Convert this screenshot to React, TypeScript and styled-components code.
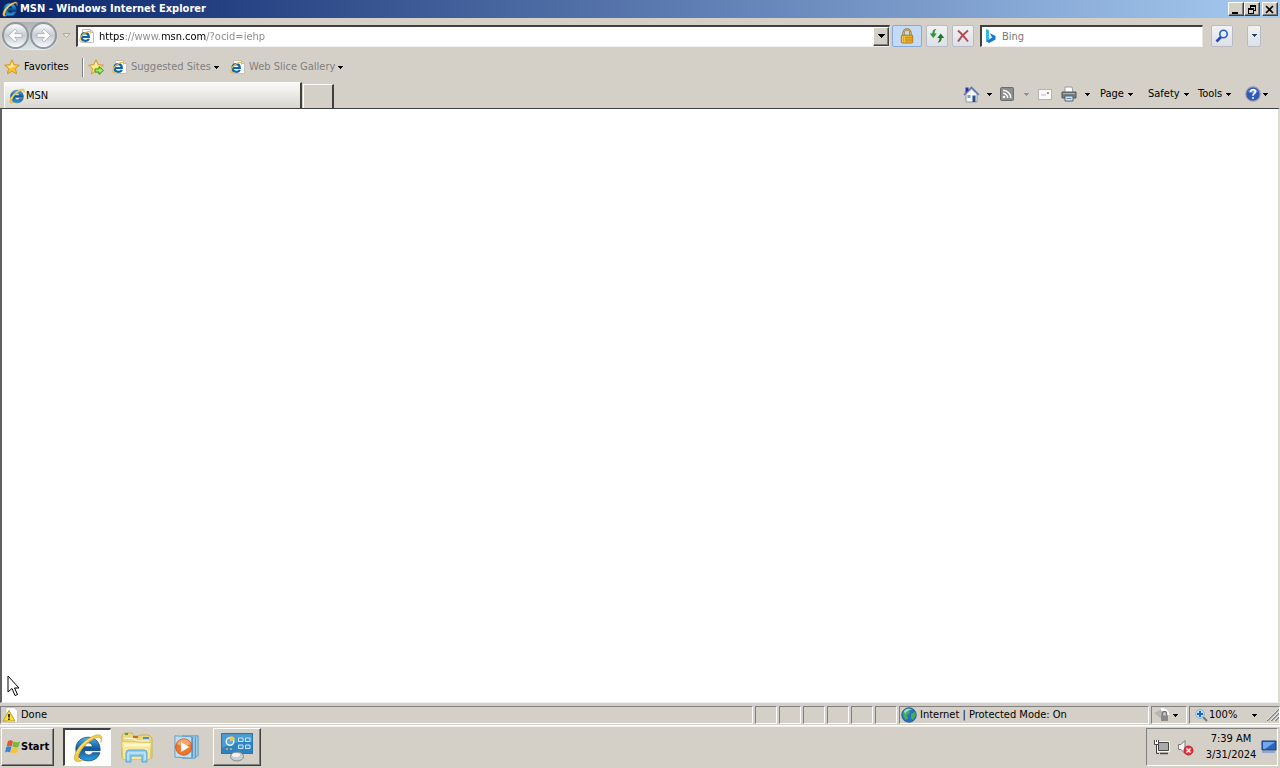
import React from "react";
import styled, { createGlobalStyle, css } from "styled-components";

const FACE = "#d4d0c8";

const GlobalStyle = createGlobalStyle`
  * { box-sizing: border-box; }
  html, body { margin: 0; padding: 0; }
  body, button, input {
    font-family: Tahoma, "DejaVu Sans Condensed", "Noto Sans", sans-serif;
    font-size: 11px;
    line-height: 14px;
    color: #000;
  }
  button { margin: 0; padding: 0; border: 0; background: none; }
  svg { display: block; flex: none; }
`;

const Desktop = styled.div`
  min-height: 100vh;
  display: flex;
  flex-direction: column;
  background: ${FACE};
  white-space: nowrap;
  overflow: hidden;
`;

const raised = css`
  border: 1px solid;
  border-color: #fff #404040 #404040 #fff;
  box-shadow: inset -1px -1px 0 #808080;
`;

const TitleBar = styled.header`
  height: 18px;
  padding: 0 2px;
  display: flex;
  align-items: center;
  gap: 2px;
  background: linear-gradient(90deg, #0a246a, #a6caf0);
`;

const Title = styled.h1`
  margin: 0;
  flex: 1;
  font-size: 11px;
  line-height: 14px;
  font-weight: bold;
  color: #fff;
`;

const CaptionButton = styled.button<{ $apart?: boolean }>`
  ${raised}
  width: 16px;
  height: 14px;
  margin-left: ${(p) => (p.$apart ? 0 : -2)}px;
  display: grid;
  place-items: center;
  background: ${FACE};
`;

const NavBar = styled.div`
  height: 35px;
  padding: 0 19px 0 2px;
  display: flex;
  align-items: center;
`;

const Travel = styled.div`
  display: flex;
  gap: 1px;
  border-radius: 14px;
  background: linear-gradient(#b0b2b5, #d9e6e8);
  box-shadow: 0 1px 1px #e2f1f2;
`;

const TravelButton = styled.button`
  width: 27px;
  height: 27px;
  display: grid;
  place-items: center;
  border: 2px solid #92979d;
  border-radius: 50%;
  background: linear-gradient(#f1f3f5 10%, #c6ccd3 50%, #f4fbfd);
`;

const HistoryButton = styled.button`
  width: 19px;
  height: 22px;
  display: grid;
  place-items: center;
`;

const Field = styled.div<{ $grow?: boolean }>`
  height: 22px;
  flex: ${(p) => (p.$grow ? "1" : "0 1 223px")};
  min-width: 0;
  margin-left: ${(p) => (p.$grow ? 0 : 6)}px;
  display: flex;
  align-items: center;
  gap: 4px;
  padding-left: ${(p) => (p.$grow ? 1 : 2)}px;
  background: #fff;
  border: 1px solid;
  border-width: 2px 1px 1px 2px;
  border-color: #404040 #e8e5df #f4f2ee #404040;
`;

const Input = styled.input`
  flex: 1;
  min-width: 0;
  height: 16px;
  padding: 0;
  border: 0;
  outline: 0;
  background: transparent;
  &::placeholder { color: #777; opacity: 1; }
`;

/* The scheme and the domain are dark, the rest of the address is grey. */
const AddressInput = styled(Input)`
  color: transparent;
  background: linear-gradient(90deg, #000 26px, #888 26px 63px, #000 63px 107px, #888 107px);
  background-clip: text;
  -webkit-background-clip: text;
`;

const DropButton = styled.button`
  ${raised}
  width: 16px;
  height: 19px;
  display: grid;
  place-items: center;
  background: ${FACE};
`;

const ToolButton = styled.button<{ $w?: number; $gap?: number; $lit?: boolean }>`
  width: ${(p) => p.$w ?? 22}px;
  height: 22px;
  margin-left: ${(p) => p.$gap ?? 4}px;
  display: grid;
  place-items: center;
  border: 1px solid ${(p) => (p.$lit ? "#86a9dc" : "#b9bcc4")};
  border-radius: 2px;
  background: ${(p) => (p.$lit ? "#c5daf7" : "linear-gradient(#f1f2f3, #dde0e5)")};
`;

const FavoritesBar = styled.nav`
  height: 28px;
  padding-left: 4px;
  display: flex;
  align-items: center;
`;

const LinkButton = styled.button<{ $dim?: boolean; $w?: number; $gap?: number }>`
  display: flex;
  align-items: center;
  gap: ${(p) => (p.$dim ? 3 : 4)}px;
  min-width: ${(p) => p.$w ?? 0}px;
  margin-left: ${(p) => p.$gap ?? 0}px;
  color: ${(p) => (p.$dim ? "#808080" : "#000")};
`;

const Divider = styled.span`
  width: 2px;
  height: 19px;
  border-left: 1px solid #808080;
  border-right: 1px solid #fff;
`;

const TabRow = styled.div`
  height: 27px;
  padding: 0 12px 0 4px;
  display: flex;
  align-items: flex-end;
`;

const Tab = styled.button`
  width: 298px;
  height: 26px;
  padding-left: 4px;
  display: flex;
  align-items: center;
  gap: 1px;
  background: linear-gradient(#fafaf9, #d8d5ce);
  border: 1px solid;
  border-width: 1px 2px 0 1px;
  border-color: #fff #404040 #fff #fff;
`;

const NewTab = styled.button`
  width: 31px;
  height: 24px;
  margin-left: 1px;
  border: 1px solid;
  border-width: 1px 2px 0 1px;
  border-color: #fff #404040 #fff #fff;
`;

const Commands = styled.div`
  height: 28px;
  margin-left: auto;
  display: flex;
  align-items: center;
`;

const Command = styled.button<{ $w: number; $gap?: number }>`
  width: ${(p) => p.$w}px;
  height: 22px;
  display: flex;
  align-items: center;
  gap: ${(p) => p.$gap ?? 4}px;
`;

const Page = styled.main`
  flex: 1;
  background: #fff;
  position: relative;
  border: 1px solid;
  border-width: 1px 2px 1px 2px;
  border-color: #404040 #dedbd5 #f0eeea #606060;
`;

const Pointer = styled.svg`
  position: absolute;
  left: 5px;
  bottom: 5px;
`;

const StatusBar = styled.footer`
  height: 23px;
  padding-top: 3px;
  display: flex;
  gap: 2px;
  border-bottom: 1px solid #fff;
`;

const Pane = styled.div<{ $w?: number }>`
  flex: ${(p) => (p.$w ? `0 0 ${p.$w}px` : "1")};
  height: 18px;
  padding-left: 1px;
  display: flex;
  align-items: center;
  gap: 3px;
  border: 1px solid;
  border-color: #808080 #fff #fff #808080;
`;

const ZoomButton = styled.button`
  flex: 1;
  height: 16px;
  padding-left: 4px;
  display: flex;
  align-items: center;
  gap: 1px;
`;

const Percent = styled.span`
  width: 42px;
  text-align: left;
`;

const Taskbar = styled.footer`
  height: 42px;
  padding: 1px 2px 2px 1px;
  display: flex;
  align-items: center;
  border-top: 1px solid #f4f2ee;
`;

const StartButton = styled.button`
  ${raised}
  width: 53px;
  height: 38px;
  padding-left: 3px;
  display: flex;
  align-items: center;
  font-weight: bold;
  margin-right: 9px;
`;

const TaskButton = styled.button<{ $state?: "active" | "open" }>`
  width: 48px;
  height: 38px;
  margin-right: 2px;
  display: grid;
  place-items: center;
  ${(p) => p.$state === "open" && raised}
  ${(p) =>
    p.$state === "active" &&
    css`
      background: #fdfdfc;
      border: 1px solid;
      border-width: 2px 1px 1px 2px;
      border-color: #404040 #fff #fff #404040;
    `}
`;

const Tray = styled.div`
  height: 38px;
  margin-left: auto;
  padding-left: 6px;
  display: flex;
  align-items: center;
  gap: 7px;
  border: 1px solid;
  border-color: #808080 #fff #fff #808080;
`;

const Clock = styled.time`
  width: 60px;
  line-height: 16px;
  text-align: center;
`;

const TrayButton = styled.button`
  width: 16px;
  margin-left: -7px;
`;

const Caret = ({ color = "#000" }: { color?: string }) => (
  <svg width="5" height="3" viewBox="0 0 5 3" shapeRendering="crispEdges">
    <path d="M0 0h5L2.500 3z" fill={color} />
  </svg>
);

const IeMark = ({ size }: { size: number }) => (
  <svg width={size} height={size} viewBox="0 0 32 32">
    <defs>
      <linearGradient id="ieBlue" x1="0" y1="0" x2="0" y2="1">
        <stop offset="0" stopColor="#4fb4e8" />
        <stop offset=".5" stopColor="#0f579f" />
        <stop offset="1" stopColor="#2ba0dd" />
      </linearGradient>
    </defs>
    <path
      fillRule="evenodd"
      fill="url(#ieBlue)"
      stroke="#0f4478"
      strokeWidth=".8"
      d="M16 4.500C24 4.500 29 10 29 18.800H12C12.300 21.700 14 23.500 16.700 23.500c2 0 3.300-.9 4-2.500h8C27 26.500 22.500 29.700 16.300 29.700 8.500 29.700 3 24.500 3 17.200S8.300 4.500 16 4.500zm-4 10.200h8.800c-.4-2.900-1.900-4.200-4.300-4.200s-4 1.400-4.500 4.200z"
    />
    <path
      d="M29.800 10C32.500 3 29 0 21.500 3.300 12 7.500 3.500 16.500 1.700 24.500c-1.300 6.500 3 7.500 9.300 4-5 1.800-6.500-.8-4.500-6C9.500 15.500 16 9.500 22.500 6c5.500-2.800 8-1.500 7.300 4z"
      fill="#f7c945"
      stroke="#cf9c2e"
      strokeWidth=".6"
    />
    <path d="M4 22C7 14.500 14 8.500 21 5" fill="none" stroke="#fff0a8" strokeWidth=".8" />
  </svg>
);

const IePage = () => (
  <svg width="16" height="16" viewBox="0 0 16 16">
    <path d="M3.500 1.500h8l3 3v10h-11z" fill="#fff" stroke="#c2bfb8" />
    <path d="M11.500 1.500v3h3z" fill="#ddd" stroke="#c2bfb8" />
    <path d="M3 9h6.800C9.700 6.300 8.600 5.200 6.500 5.200 4 5.200 2.500 6.700 2.500 9S4.200 12.800 6.600 12.800c1.700 0 2.700-.6 3.200-1.900" fill="none" stroke="#1262a8" strokeWidth="2.200" />
    <path d="M11.500 5.500C12 2.500 9 3 6 5 3 7 .8 10 .8 12.500c.2 1.800 2 1.600 3.500.6" fill="none" stroke="#e8bd3c" strokeWidth="1.100" />
  </svg>
);

const Star = ({ add }: { add?: boolean }) => (
  <svg width="16" height="16" viewBox="0 0 16 16">
    <path d="M8 .8l2.200 4.800 5.200.6-3.900 3.500 1.100 5.200L8 12.300l-4.600 2.600 1.100-5.200L.6 6.200l5.200-.6z" fill={add ? "#f8e16b" : "#fbc02f"} stroke="#cd8c20" strokeWidth=".8" />
    <path d="M8 3l1.200 3.500 3 .4-6.500 2.600-2.500-2.300 3.300-.5z" fill="#ffeb9a" />
    {add && <path d="M7 10h4V7.500l4.500 4L11 15.300V13H7z" fill="#a4ee63" stroke="#249c20" />}
  </svg>
);

const TravelArrow = ({ forward }: { forward?: boolean }) => (
  <svg width="17" height="17" viewBox="0 0 17 17">
    <path
      transform={forward ? "translate(17 0) scale(-1 1)" : undefined}
      d="M1.500 8.500L8 2.200l2 2-2.500 2.500H15v3.600H7.500L10 12.800l-2 2z"
      fill="#fff"
      stroke="#a4a9b0"
      strokeWidth=".8"
    />
  </svg>
);

const Lock = () => (
  <svg width="14" height="16" viewBox="0 0 16 18">
    <path d="M4 9V5.500a4 4 0 018 0V9" fill="none" stroke="#8b742f" strokeWidth="2.600" />
    <path d="M4 9V5.500a4 4 0 018 0V9" fill="none" stroke="#e3c25b" />
    <rect x="1.500" y="8" width="13" height="9" rx="1" fill="#edb32b" stroke="#a67416" />
    <path d="M2 10.500h12M2 12.500h12M2 14.500h12" stroke="#c68b1c" />
    <path d="M3 9v7M5 9v7" stroke="#f9da72" strokeWidth=".8" />
  </svg>
);

const Refresh = () => (
  <svg width="16" height="16" viewBox="0 0 16 16">
    <path d="M7.500 1C4.500 1 3.300 3 3.300 5.500H.8L4.300 10l3.500-4.500H5.500C5.500 3.500 6 2.300 7.500 1z" fill="#2a9637" />
    <path d="M8.500 14.500c3 0 4.200-2 4.200-4.500h2.500l-3.500-4.500L8.200 10h2.300c0 2-.5 3.200-2 4.500z" fill="#23752b" />
  </svg>
);

const Stop = () => (
  <svg width="14" height="14" viewBox="0 0 14 14">
    <path d="M2 1.500Q6 5 12 12.500M12 1.500Q6 6 2 12.500" fill="none" stroke="#b04a59" strokeWidth="2" />
  </svg>
);

const Bing = () => (
  <svg width="14" height="16" viewBox="0 0 14 16">
    <path d="M2 1l3 1.200v9.300L2 13.800z" fill="#35b7ec" />
    <path d="M2 13.300l3.200 1.700 6.300-3.600V8L6 5.300l1.300 3L8.500 9.200z" fill="#147bd1" />
  </svg>
);

const Magnifier = () => (
  <svg width="14" height="14" viewBox="0 0 14 14">
    <path d="M6 8L1.500 12.500" stroke="#2449b0" strokeWidth="2.600" />
    <circle cx="8.500" cy="5" r="3.700" fill="#e4f1ff" stroke="#2a5ad5" strokeWidth="1.600" />
  </svg>
);

const Home = () => (
  <svg width="17" height="17" viewBox="0 0 17 17">
    <path d="M3 8v8h11V8L8.500 3z" fill="#f6f8fc" stroke="#8996ae" />
    <path d="M1 9l7.500-7.500L16 9" fill="none" stroke="#6478b3" strokeWidth="1.600" />
    <path d="M2.500 1.500h3v3l-3 2.500z" fill="#3033a6" />
    <path d="M4.500 9h3v3h-3z" fill="#729fd2" />
    <path d="M9.500 9.500h3V16h-3z" fill="#284f85" />
  </svg>
);

const Rss = () => (
  <svg width="14" height="14" viewBox="0 0 14 14">
    <rect x=".5" y=".5" width="13" height="13" rx="1" fill="#8d8d8d" stroke="#6c6c6c" />
    <circle cx="4" cy="10" r="1.300" fill="#fff" />
    <path d="M3 6.300A4.700 4.700 0 017.700 11M3 3.200A7.800 7.800 0 0110.800 11" fill="none" stroke="#fff" strokeWidth="1.500" />
  </svg>
);

const Mail = () => (
  <svg width="14" height="11" viewBox="0 0 14 11">
    <rect x=".5" y=".5" width="13" height="10" fill="#fafafa" stroke="#b6b4b0" />
    <path d="M3 6h5" stroke="#bbb" />
    <path d="M9 3h2v2H9z" fill="#999" />
  </svg>
);

const Printer = () => (
  <svg width="16" height="16" viewBox="0 0 16 16">
    <path d="M4 1h7l1 6H4z" fill="#fff" stroke="#9a9a9a" />
    <path d="M1 6h14v6H1z" fill="#777f83" stroke="#50575b" />
    <path d="M2 7.500h12" stroke="#a9b0b2" />
    <path d="M4 10h8v5H4z" fill="#dceaf6" stroke="#51606b" />
    <path d="M5.500 12.500h5" stroke="#5088b8" />
  </svg>
);

const Help = () => (
  <svg width="16" height="16" viewBox="0 0 16 16">
    <circle cx="8" cy="8" r="7.200" fill="#3159b5" stroke="#939cb0" strokeWidth="1.200" />
    <path d="M3 6a5.500 5.500 0 0110 0Q8 8 3 6z" fill="#7195db" />
    <path d="M5.700 6c0-3 4.700-3 4.700-.2C10.400 7.600 8 7.500 8 9.700" fill="none" stroke="#fff" strokeWidth="1.700" />
    <circle cx="8" cy="12" r="1" fill="#fff" />
  </svg>
);

const Warning = () => (
  <svg width="16" height="16" viewBox="0 0 16 16">
    <path d="M4 .5h8l3.500 3v12H4z" fill="#fff" stroke="#c9c6bf" />
    <path d="M7 3.500l6 10.500H1z" fill="#fbe038" stroke="#b8a02a" strokeLinejoin="round" />
    <path d="M7 7v3.500M7 11.500V13" stroke="#111" strokeWidth="1.600" />
  </svg>
);

const Globe = () => (
  <svg width="16" height="16" viewBox="0 0 16 16">
    <circle cx="8" cy="8" r="7.300" fill="#2472bb" stroke="#285d87" strokeWidth=".8" />
    <path d="M3 4c2-3 5-3 6-2L8 4l1 2-3 2 1 3-2 2C3 11 1 8 3 4zM10 7l4-2c1.500 3 0 6.500-2.500 8L10 11z" fill="#49ac59" />
    <path d="M3 4q4-4 8-1-5 0-7 4z" fill="#b8e5ee" opacity=".8" />
  </svg>
);

const FilterLock = () => (
  <svg width="17" height="16" viewBox="0 0 17 16">
    <path d="M1 6l8-4v10z" fill="#b5b5b5" />
    <path d="M8 2.500a6 6 0 017 5.500" fill="none" stroke="#fff" strokeWidth="3" />
    <path d="M9.500 9V6.500a2 2 0 014 0V9" fill="none" stroke="#777" strokeWidth="1.400" />
    <path d="M8 8.500h7V14H8z" fill="#898989" />
  </svg>
);

const ZoomIcon = () => (
  <svg width="13" height="13" viewBox="0 0 13 13">
    <path d="M8 8l4 4" stroke="#6c7884" strokeWidth="2" />
    <circle cx="5" cy="5" r="4.300" fill="#c5e0f7" stroke="#84afd7" />
    <path d="M5 2v6M2 5h6" stroke="#176abd" strokeWidth="2" />
  </svg>
);

const Grip = () => (
  <svg width="12" height="12" viewBox="0 0 12 12">
    <path d="M0 12L12 0M4 12l8-8M8 12l4-4" stroke="#808080" strokeWidth="1.500" />
    <path d="M-1 12L12-1M3 12l9-9M7 12l5-5" stroke="#fff" strokeWidth=".7" />
  </svg>
);

const Flag = () => (
  <svg width="16" height="16" viewBox="0 0 16 16">
    <path d="M3 2q3-1.500 5 .3L6.700 7.500Q4.500 6 1.600 7.500z" fill="#e4572d" />
    <path d="M8.500 2.500q3 1.600 6.500.1L13.600 7.800q-3.300 1.300-6.300-.2z" fill="#79b843" />
    <path d="M1.300 8q3-1.400 5.100.1L5 13.500Q2.500 12 0 13.500z" fill="#3d83cf" />
    <path d="M7 8.400q3 1.400 6.400.1L12 13.500q-3 1.500-6.300-.1z" fill="#f6c435" />
  </svg>
);

const Folder = () => (
  <svg width="34" height="32" viewBox="0 0 34 32">
    <path d="M2 27V4l3-2h7l2 3h5l2-1h8l3 3v20z" fill="#efd779" stroke="#cbb15a" />
    <path d="M5 2h3v2H5z" fill="#45a358" />
    <path d="M13 5h5v2h-5z" fill="#c46837" />
    <path d="M23 6h6v2h-6z" fill="#4a91c9" />
    <path d="M4 7l10 1 3 2h12" fill="none" stroke="#fff" />
    <path d="M1.500 10.500l30 1-1.500 17H3z" fill="#f7e99b" stroke="#d9c66e" />
    <path d="M4 14h26" stroke="#fff6c3" strokeWidth="3" />
    <path d="M6 31V22q0-3 3-3h15q3 0 3 3v9h-5v-6H11v6z" fill="#93cdec" stroke="#5ca5d0" />
    <path d="M8 29v-7h17v7" fill="none" stroke="#d8f3ff" />
  </svg>
);

const MediaPlayer = () => (
  <svg width="28" height="26" viewBox="0 0 30 28">
    <path d="M10 2h17v21l-3 3H10z" fill="#9dcae5" stroke="#5c9ac2" />
    <path d="M24 3v22M21 3v22" stroke="#4d91bf" />
    <path d="M2 2l18 1v23L2 25z" fill="#bde0f1" stroke="#609dc4" />
    <circle cx="11.500" cy="14" r="8.800" fill="#ef762d" stroke="#cf5820" />
    <path d="M4 11a8 8 0 0115 0q-7 3-15 0z" fill="#f8a46a" />
    <path d="M8.500 8.500l9 5.500-9 5.500z" fill="#fff" />
  </svg>
);

const ServerManager = () => (
  <svg width="34" height="30" viewBox="0 0 34 30">
    <rect x="1.500" y="1.500" width="31" height="20" fill="#2f83c0" stroke="#2a76ad" />
    <path d="M2 2h30v8Q18 8 2 16z" fill="#65b4df" opacity=".5" />
    <circle cx="10" cy="9.500" r="3.800" fill="#5aa9dc" stroke="#dff3ff" strokeWidth="1.500" />
    <path d="M10 9.500V4.500q4-1 5 3z" fill="#f2c35a" />
    <path d="M18.500 6h4.500v3.500h-4.500zM25.500 6H30v3.500h-4.500zM18.500 13h4.500v3.500h-4.500zM25.500 13H30v3.500h-4.500z" fill="#3d93d0" stroke="#cbe8fa" />
    <path d="M6 17h2M10 17h2" stroke="#e8b172" strokeWidth="1.500" />
    <ellipse cx="17" cy="24.500" rx="6.500" ry="4.500" fill="#c9cdd0" stroke="#83898d" />
    <ellipse cx="16" cy="23" rx="4" ry="2" fill="#f0f2f3" />
  </svg>
);

const Network = () => (
  <svg width="17" height="17" viewBox="0 0 17 17">
    <path d="M5.500 3.500h10v8h-10z" fill="#aaa" stroke="#fff" strokeWidth="2.500" />
    <path d="M5.500 3.500h10v8h-10z" fill="#aaa" stroke="#444" />
    <path d="M7 14.500h8" stroke="#444" strokeWidth="1.500" />
    <path d="M1.500 1v4.500h4V1M3.500 1v2" fill="#fff" stroke="#444" />
    <path d="M3.500 6v8.500H6" fill="none" stroke="#444" />
  </svg>
);

const Speaker = () => (
  <svg width="17" height="17" viewBox="0 0 17 17">
    <path d="M1.500 5.500H4L8 1.500v13l-4-4H1.500z" fill="#f6f6f6" stroke="#777" />
    <circle cx="11.500" cy="11.500" r="4.500" fill="#df3842" stroke="#b3222c" />
    <path d="M9.500 9.500l4 4M13.500 9.500l-4 4" stroke="#fff" strokeWidth="1.400" />
  </svg>
);

const ShowDesktop = () => (
  <svg width="16" height="14" viewBox="0 0 16 14">
    <path d="M1 1h14v9H1z" fill="#2864c4" stroke="#153d84" />
    <path d="M2 2h12L4 9H2z" fill="#74a7e8" />
    <path d="M1 12h13" stroke="#8fa7cc" strokeWidth="2" />
  </svg>
);

export default function App() {
  return (
    <>
      <GlobalStyle />
      <Desktop>
        <TitleBar>
          <IeMark size={16} />
          <Title>MSN - Windows Internet Explorer</Title>
          <CaptionButton aria-label="Minimize">
            <svg width="10" height="9" viewBox="0 0 10 9"><path d="M1 7h6v2H1z" /></svg>
          </CaptionButton>
          <CaptionButton aria-label="Restore">
            <svg width="10" height="9" viewBox="0 0 10 9" shapeRendering="crispEdges">
              <path d="M3 0h6v6H7V5h1V2H4v1H3zM1 3h6v6H1zM2 5v3h4V5z" fillRule="evenodd" />
            </svg>
          </CaptionButton>
          <CaptionButton $apart aria-label="Close">
            <svg width="10" height="9" viewBox="0 0 10 9"><path d="M1 1l7 7M8 1L1 8" stroke="#000" strokeWidth="1.600" /></svg>
          </CaptionButton>
        </TitleBar>

        <NavBar>
          <Travel>
            <TravelButton aria-label="Back"><TravelArrow /></TravelButton>
            <TravelButton aria-label="Forward"><TravelArrow forward /></TravelButton>
          </Travel>
          <HistoryButton aria-label="Recent pages">
            <svg width="9" height="6" viewBox="0 0 9 6"><path d="M1 .5h7l-3.500 4z" fill="#e9e7e2" stroke="#aaa69f" /></svg>
          </HistoryButton>
          <Field $grow>
            <IePage />
            <AddressInput aria-label="Address" defaultValue="https://www.msn.com/?ocid=iehp" />
            <DropButton aria-label="Show addresses">
              <svg width="7" height="4" viewBox="0 0 7 4" shapeRendering="crispEdges"><path d="M0 0h7L3.500 4z" /></svg>
            </DropButton>
          </Field>
          <ToolButton $w={30} $gap={2} $lit aria-label="Security report"><Lock /></ToolButton>
          <ToolButton aria-label="Refresh"><Refresh /></ToolButton>
          <ToolButton aria-label="Stop"><Stop /></ToolButton>
          <Field>
            <Bing />
            <Input aria-label="Search" placeholder="Bing" />
          </Field>
          <ToolButton $gap={8} aria-label="Search"><Magnifier /></ToolButton>
          <ToolButton $w={14} $gap={14} aria-label="Search options"><Caret color="#1d4876" /></ToolButton>
        </NavBar>

        <FavoritesBar>
          <LinkButton $w={78}><Star />Favorites</LinkButton>
          <Divider />
          <LinkButton $gap={4} aria-label="Add to Favorites Bar"><Star add /></LinkButton>
          <LinkButton $dim $w={108} $gap={8}><IePage />Suggested Sites<Caret /></LinkButton>
          <LinkButton $dim $gap={10}><IePage />Web Slice Gallery<Caret /></LinkButton>
        </FavoritesBar>

        <TabRow>
          <Tab><IeMark size={16} />MSN</Tab>
          <NewTab aria-label="New tab" />
          <Commands>
            <Command $w={37} $gap={7} aria-label="Home"><Home /><Caret /></Command>
            <Command $w={38} $gap={10} aria-label="Feeds"><Rss /><Caret color="#96938d" /></Command>
            <Command $w={23} aria-label="Read mail"><Mail /></Command>
            <Command $w={39} $gap={8} aria-label="Print"><Printer /><Caret /></Command>
            <Command $w={48}>Page<Caret /></Command>
            <Command $w={50}>Safety<Caret /></Command>
            <Command $w={47}>Tools<Caret /></Command>
            <Command $w={23} $gap={2} aria-label="Help"><Help /><Caret /></Command>
          </Commands>
        </TabRow>

        <Page>
          <Pointer width="14" height="22" viewBox="0 0 14 22">
            <path d="M1 1v16l4-3.500 3 7 2.500-1-3-6.500H12z" fill="#fff" stroke="#000" />
          </Pointer>
        </Page>

        <StatusBar>
          <Pane><Warning />Done</Pane>
          {[0, 1, 2, 3, 4, 5].map((n) => <Pane key={n} $w={22} />)}
          <Pane $w={250}><Globe />Internet | Protected Mode: On</Pane>
          <Pane $w={36}><FilterLock /><Caret /></Pane>
          <Pane $w={91}>
            <ZoomButton><ZoomIcon /><Percent>100%</Percent><Caret /></ZoomButton>
            <Grip />
          </Pane>
        </StatusBar>

        <Taskbar>
          <StartButton><Flag />Start</StartButton>
          <TaskButton $state="active" aria-label="Internet Explorer"><IeMark size={30} /></TaskButton>
          <TaskButton aria-label="Windows Explorer"><Folder /></TaskButton>
          <TaskButton aria-label="Media Player"><MediaPlayer /></TaskButton>
          <TaskButton $state="open" aria-label="Server Manager"><ServerManager /></TaskButton>
          <Tray>
            <Network />
            <Speaker />
            <Clock>7:39 AM<br />3/31/2024</Clock>
            <TrayButton aria-label="Show desktop"><ShowDesktop /></TrayButton>
          </Tray>
        </Taskbar>
      </Desktop>
    </>
  );
}
